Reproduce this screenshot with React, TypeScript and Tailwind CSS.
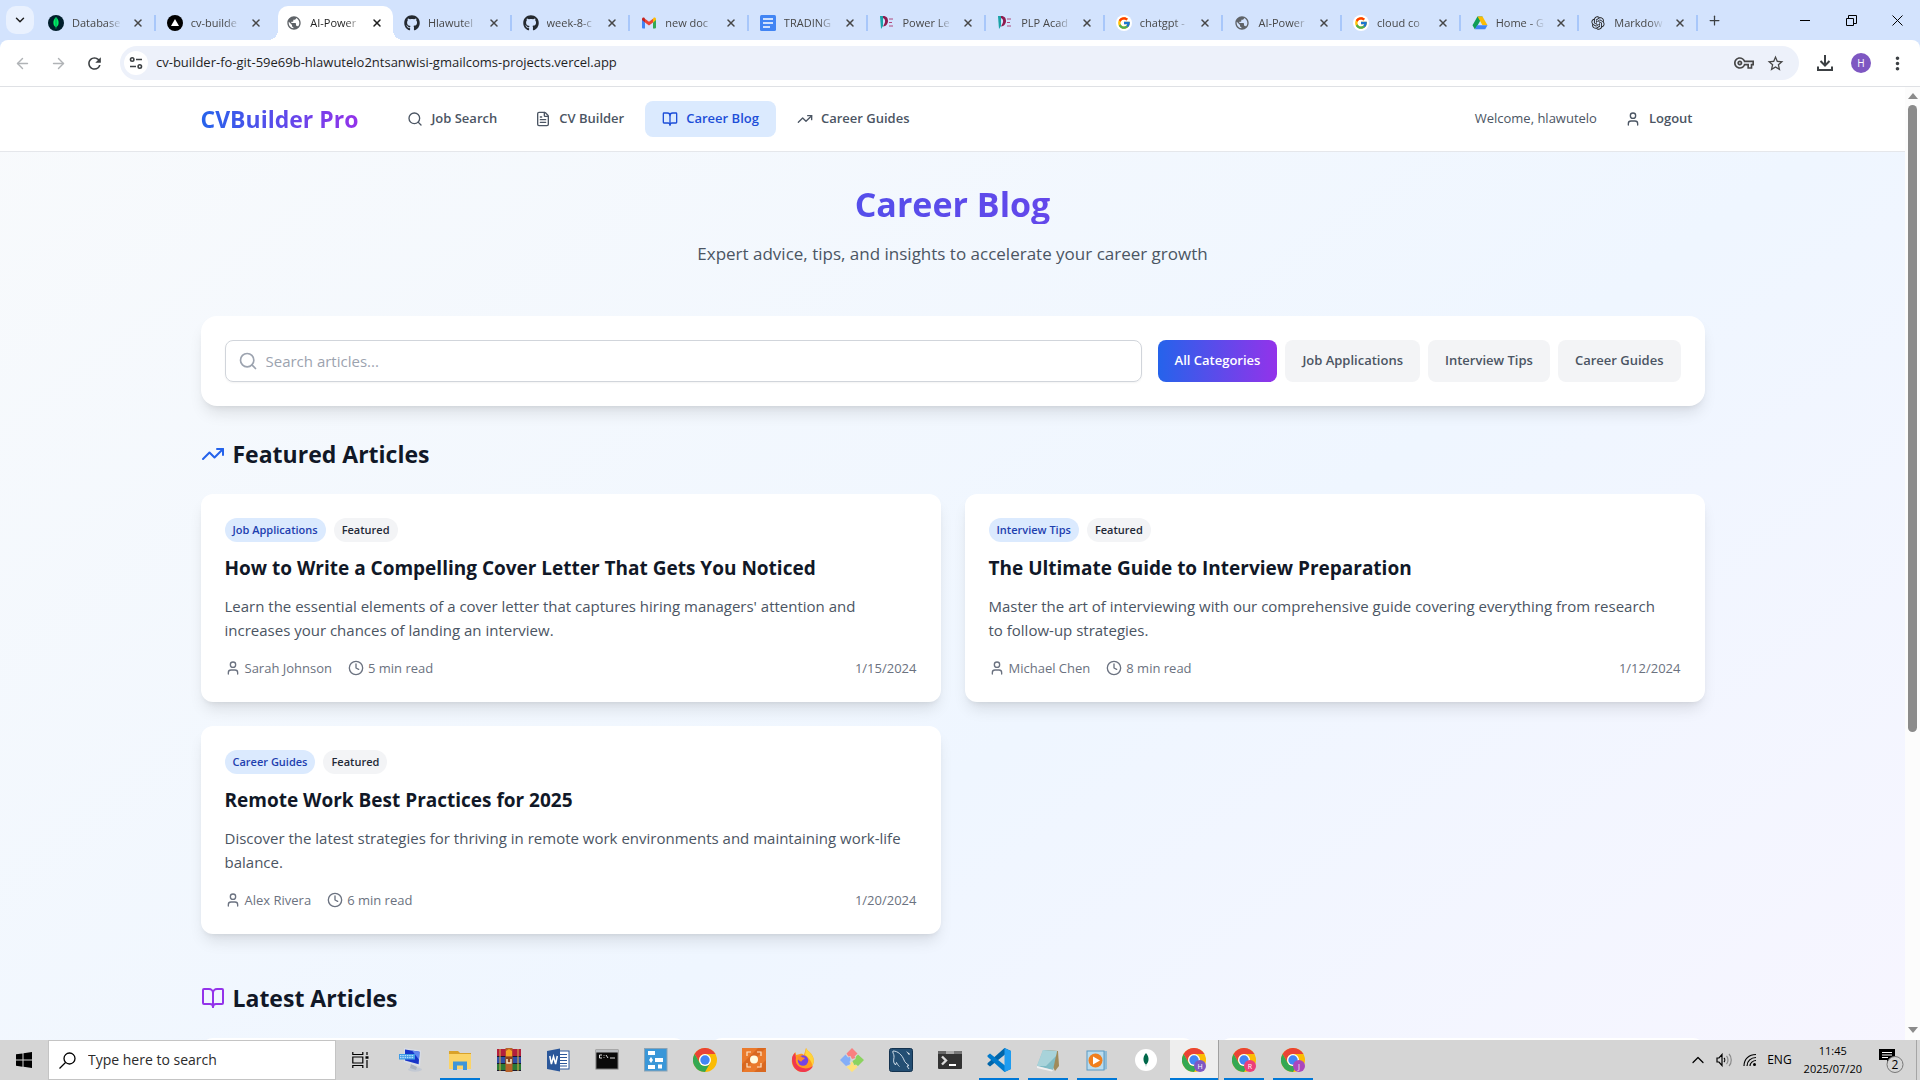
import React from "react";
import {
  Search,
  FileText,
  BookOpen,
  TrendingUp,
  User,
  Clock,
  ArrowLeft,
  ArrowRight,
  ChevronDown,
  ChevronUp,
  Plus,
  X,
} from "lucide-react";
import { FaGithub } from "react-icons/fa";
import { FcGoogle } from "react-icons/fc";
import { RiOpenaiFill } from "react-icons/ri";
import { MdOutlineVpnKey, MdStarOutline, MdRefresh, MdMoreVert, MdPublic } from "react-icons/md";

/* ---------- Tab favicons ---------- */

const MongoTabIcon = () => (
  <svg viewBox="0 0 16 16" className="size-4">
    <circle cx="8" cy="8" r="8" fill="#001e2b" />
    <path d="M8 2c2 2.200 2.800 4 2.600 6.200C10.400 10.300 9.300 11.400 8.300 12.200L8 14l-.3-1.800C6.700 11.400 5.600 10.300 5.400 8.200 5.200 6 6 4.200 8 2z" fill="#00ed64" />
    <path d="M8 3v11" stroke="#00684a" strokeWidth=".6" />
  </svg>
);
const VercelIcon = () => (
  <svg viewBox="0 0 16 16" className="size-4">
    <circle cx="8" cy="8" r="8" fill="#000" />
    <path d="M8 4l4 7H4z" fill="#fff" />
  </svg>
);
const GlobeIcon = () => <MdPublic className="size-4 text-[#5f6368]" />;
const GithubIcon = () => <FaGithub className="size-4 text-[#24292f]" />;
const GmailIcon = () => (
  <svg viewBox="0 0 16 16" className="size-4">
    <path d="M1 4v8.500c0 .5.400.9.900.9H4V7.200z" fill="#4285f4" />
    <path d="M15 4v8.500c0 .5-.4.9-.9.9H12V7.200z" fill="#34a853" />
    <path d="M12 3.800v3.600l3-2.300V4c0-1.300-1.400-2-2.400-1.200z" fill="#fbbc04" />
    <path d="M4 3.800v3.600l4 3 4-3V3.800l-4 3z" fill="#ea4335" />
    <path d="M1 4v1.100l3 2.300V3.800l-.6-1C2.400 2 1 2.700 1 4z" fill="#c5221f" />
  </svg>
);
const DocsIcon = () => (
  <svg viewBox="0 0 16 16" className="size-4">
    <rect x="0" y="0" width="16" height="16" rx="1.500" fill="#4285f4" />
    <path d="M3 4h10M3 8h10M3 12h7" stroke="#fff" strokeWidth="1.600" />
  </svg>
);
const PlpIcon = () => (
  <svg viewBox="0 0 16 16" className="size-4">
    <path d="M1 1h3v10l-2 3z" fill="#1aa3a8" />
    <path d="M4 1c4 0 5 2.500 5 5s-2 5.500-5 5.500l1.500-3C6.500 7 6.500 4 4 3z" fill="#8e1b4f" />
    <path d="M10 4h4M10 7.500h3M10 11h4" stroke="#b0487c" strokeWidth="1" />
  </svg>
);
const GoogleIcon = () => (
  <span className="flex size-4 items-center justify-center rounded-full bg-white">
    <FcGoogle className="size-[14px]" />
  </span>
);
const DriveIcon = () => (
  <svg viewBox="0 0 16 16" className="size-4">
    <path d="M5.500 1.500h5L5 11.500 2.800 14.200.5 10.300z" fill="#0f9d58" />
    <path d="M5.500 1.500h5l5 8.800h-5z" fill="#fbbc04" />
    <path d="M5.200 10.300h10.300l-2.300 3.900H2.800z" fill="#4285f4" />
  </svg>
);
const OpenAiIcon = () => <RiOpenaiFill className="size-4 text-[#1f1f1f]" />;

const tabs = [
  { title: "Database", Icon: MongoTabIcon },
  { title: "cv-builde", Icon: VercelIcon },
  { title: "AI-Power", Icon: GlobeIcon, active: true },
  { title: "Hlawutel", Icon: GithubIcon },
  { title: "week-8-c", Icon: GithubIcon },
  { title: "new doc", Icon: GmailIcon },
  { title: "TRADING", Icon: DocsIcon },
  { title: "Power Le", Icon: PlpIcon },
  { title: "PLP Acad", Icon: PlpIcon },
  { title: "chatgpt -", Icon: GoogleIcon },
  { title: "AI-Power", Icon: GlobeIcon },
  { title: "cloud co", Icon: GoogleIcon },
  { title: "Home - G", Icon: DriveIcon },
  { title: "Markdow", Icon: OpenAiIcon },
];

function TabStrip() {
  return (
    <div className="flex h-10 items-end bg-[#d3e3fd]">
      <div className="flex h-10 w-[37px] items-center pl-[6px]">
        <button aria-label="Search tabs" className="flex size-7 items-center justify-center rounded-[10px] bg-[#e9f1fe] text-[#1f1f1f]">
          <ChevronDown size={14} strokeWidth={2.5} />
        </button>
      </div>
      <div className="grid h-[34px] min-w-0 max-w-[1661px] flex-1 grid-cols-14">
        {tabs.map(({ title, Icon, active }, i) => (
          <div key={i} className={active ? "flex min-w-0 pl-1" : "flex min-w-0 pl-[11px]"}>
            <div
              className={
                active
                  ? "relative flex min-w-0 flex-1 items-center rounded-t-[10px] bg-white pl-2 text-[#1f1f1f]"
                  : "flex min-w-0 flex-1 items-center text-[#474747]"
              }
            >
              {active && (
                <>
                  <span className="absolute bottom-0 -left-[10px] size-[10px] bg-[radial-gradient(circle_at_top_left,transparent_10px,white_10px)]" />
                  <span className="absolute bottom-0 -right-[10px] size-[10px] bg-[radial-gradient(circle_at_top_right,transparent_10px,white_10px)]" />
                </>
              )}
              <button className="flex min-w-0 flex-1 items-center gap-2">
                <span className="shrink-0">
                  <Icon />
                </span>
                <span className="min-w-0 flex-1 overflow-hidden text-left text-[11px] whitespace-nowrap [mask-image:linear-gradient(to_right,black_70%,transparent)]">
                  {title}
                </span>
              </button>
              <button aria-label="Close tab" className="flex w-8 shrink-0 items-center justify-center">
                <X size={12} strokeWidth={3} />
              </button>
              {!active && <span className={i === 1 ? "h-4 w-[2px]" : "h-4 w-[2px] bg-[#a8c7fa]"} />}
            </div>
          </div>
        ))}
      </div>
      <button aria-label="New tab" className="flex h-10 w-[33px] items-center justify-center text-[#3c4043]">
        <Plus size={15} strokeWidth={2} />
      </button>
      <div className="ml-auto flex h-10 text-black">
        <button aria-label="Minimize" className="flex w-[46px] items-center justify-center">
          <svg width="10" height="10" stroke="currentColor">
            <path d="M0 5.500h10" />
          </svg>
        </button>
        <button aria-label="Restore" className="flex w-[46px] items-center justify-center">
          <svg width="11" height="11" stroke="currentColor" fill="none">
            <path d="M.5 3.500h7v7h-7zM2.500 3V.5h8v8H8" />
          </svg>
        </button>
        <button aria-label="Close" className="flex w-[46px] items-center justify-center">
          <svg width="11" height="11" stroke="currentColor">
            <path d="M.5.5l10 10M10.500.5l-10 10" />
          </svg>
        </button>
      </div>
    </div>
  );
}

function Toolbar() {
  return (
    <div className="bg-[#d3e3fd]">
      <div className="flex h-[47px] items-center rounded-t-lg border-b border-[#dfe1e5] bg-white">
        <button aria-label="Back" className="flex w-9 justify-center pl-2 text-[#b0b3b6]">
          <ArrowLeft size={17} strokeWidth={2} />
        </button>
        <button aria-label="Forward" className="flex w-9 justify-center pl-2 text-[#b0b3b6]">
          <ArrowRight size={17} strokeWidth={2} />
        </button>
        <button aria-label="Reload" className="flex w-12 justify-center pr-1 text-[#3c4043]">
          <MdRefresh size={19} />
        </button>
        <div className="flex h-[34px] min-w-0 flex-1 items-center rounded-full bg-[#edf1fa] pl-1">
          <button aria-label="Site information" className="flex size-6 items-center justify-center rounded-full bg-white text-[#3c4043]">
            <svg width="14" height="14" viewBox="0 0 14 14" fill="none" stroke="currentColor" strokeWidth="1.600">
              <circle cx="3.200" cy="3.500" r="1.700" />
              <path d="M7 3.500h6M1 10.500h6" />
              <circle cx="10.800" cy="10.500" r="1.700" />
            </svg>
          </button>
          <input
            aria-label="Address"
            className="min-w-0 flex-1 bg-transparent px-2 text-[13px] text-[#1f1f1f] outline-none"
            defaultValue="cv-builder-fo-git-59e69b-hlawutelo2ntsanwisi-gmailcoms-projects.vercel.app"
          />
          <button aria-label="Passwords" className="mr-3 text-[#474747]">
            <MdOutlineVpnKey size={20} />
          </button>
          <button aria-label="Bookmark" className="mr-[14px] text-[#474747]">
            <MdStarOutline size={19} />
          </button>
        </div>
        <button aria-label="Downloads" className="ml-[18px] text-[#3c4043]">
          <svg width="16" height="18" viewBox="0 0 16 18" fill="none" stroke="currentColor" strokeWidth="2">
            <path d="M8 1v10M3.500 7L8 11.500 12.500 7M1 12.500V16h14v-3.500" />
          </svg>
        </button>
        <button aria-label="Profile" className="ml-[18px] flex size-5 items-center justify-center rounded-full bg-[#7e57c2] text-[10px] text-white">
          H
        </button>
        <button aria-label="Menu" className="mr-3 ml-4 text-[#3c4043]">
          <MdMoreVert size={21} />
        </button>
      </div>
    </div>
  );
}

/* ---------- Web page ---------- */

const navItems = [
  { label: "Job Search", Icon: Search },
  { label: "CV Builder", Icon: FileText },
  { label: "Career Blog", Icon: BookOpen, active: true },
  { label: "Career Guides", Icon: TrendingUp },
];

const categories = ["All Categories", "Job Applications", "Interview Tips", "Career Guides"];

const articles = [
  {
    category: "Job Applications",
    title: "How to Write a Compelling Cover Letter That Gets You Noticed",
    excerpt:
      "Learn the essential elements of a cover letter that captures hiring managers' attention and increases your chances of landing an interview.",
    author: "Sarah Johnson",
    time: "5 min read",
    date: "1/15/2024",
  },
  {
    category: "Interview Tips",
    title: "The Ultimate Guide to Interview Preparation",
    excerpt:
      "Master the art of interviewing with our comprehensive guide covering everything from research to follow-up strategies.",
    author: "Michael Chen",
    time: "8 min read",
    date: "1/12/2024",
  },
  {
    category: "Career Guides",
    title: "Remote Work Best Practices for 2025",
    excerpt:
      "Discover the latest strategies for thriving in remote work environments and maintaining work-life balance.",
    author: "Alex Rivera",
    time: "6 min read",
    date: "1/20/2024",
  },
];

function SiteHeader() {
  return (
    <header className="border-b border-[#e5e7eb] bg-white">
      <div className="mx-auto flex h-16 max-w-[1536px] items-center px-4">
        <a href="#home" className="bg-linear-to-r/srgb from-[#2563eb] to-[#9333ea] bg-clip-text text-[23px] leading-8 font-bold text-transparent">
          CVBuilder Pro
        </a>
        <nav className="ml-8 flex gap-1">
          {navItems.map(({ label, Icon, active }) => (
            <a
              key={label}
              href="#nav"
              className={
                active
                  ? "flex h-9 items-center gap-2 rounded-lg bg-[#dbeafe] px-[17px] text-[13px] font-semibold text-[#1d4ed8]"
                  : "flex h-9 items-center gap-2 rounded-lg px-[17px] text-[13px] font-semibold text-[#4b5563]"
              }
            >
              <Icon size={16} />
              {label}
            </a>
          ))}
        </nav>
        <div className="ml-auto flex items-center gap-4">
          <span className="text-[13px] text-[#4b5563]">Welcome, hlawutelo</span>
          <button className="flex h-9 items-center gap-2 rounded-lg px-3 text-[13px] font-semibold text-[#4b5563]">
            <User size={16} />
            Logout
          </button>
        </div>
      </div>
    </header>
  );
}

function ArticleCard({ category, title, excerpt, author, time, date }: (typeof articles)[number]) {
  return (
    <article className="rounded-xl bg-white p-6 shadow-lg">
      <div className="flex gap-2 text-[11px] leading-4 font-semibold">
        <span className="rounded-full bg-[#dbeafe] px-2 py-1 text-[#1e40af]">{category}</span>
        <span className="rounded-full bg-[#f3f4f6] px-2 py-1 text-[#1f2937]">Featured</span>
      </div>
      <h3 className="mt-3 text-[19px] leading-7 font-bold text-[#111827]">{title}</h3>
      <p className="mt-3 pr-3 text-[15px] leading-6 text-[#4b5563]">{excerpt}</p>
      <div className="mt-4 flex items-center gap-4 text-[13px] leading-5 text-[#6b7280]">
        <span className="flex items-center gap-1">
          <User size={16} />
          {author}
        </span>
        <span className="flex items-center gap-1">
          <Clock size={16} />
          {time}
        </span>
        <time className="ml-auto">{date}</time>
      </div>
    </article>
  );
}

function BlogPage() {
  return (
    <div className="min-h-[1390px] flex-1 bg-linear-to-br/srgb from-[#f8fafc] via-[#eff6ff] to-[#faf5ff]">
      <SiteHeader />
      <main className="mx-auto max-w-[1536px] px-4 py-8">
        <div className="mb-12 text-center">
          <h1 className="mb-4 bg-linear-to-r/srgb from-[#2563eb] to-[#9333ea] bg-clip-text text-[34px] leading-10 font-bold text-transparent">
            Career Blog
          </h1>
          <p className="text-[17px] leading-7 text-[#4b5563]">
            Expert advice, tips, and insights to accelerate your career growth
          </p>
        </div>

        <section className="mb-8 flex gap-4 rounded-2xl bg-white p-6 shadow-lg">
          <label className="flex h-[42px] min-w-0 flex-1 items-center gap-2 rounded-lg border border-[#d1d5db] px-3 text-[#9ca3af] shadow-xs">
            <Search size={20} />
            <input
              aria-label="Search articles"
              placeholder="Search articles..."
              className="min-w-0 flex-1 bg-transparent text-[15px] text-[#111827] outline-none placeholder:text-[#9ca3af]"
            />
          </label>
          <div className="flex gap-2">
            {categories.map((label, i) => (
              <button
                key={label}
                className={
                  i === 0
                    ? "rounded-lg bg-linear-to-r/srgb from-[#2563eb] to-[#9333ea] px-[17px] text-[13px] font-semibold text-white"
                    : "rounded-lg bg-[#f3f4f6] px-[17px] text-[13px] font-semibold text-[#4b5563]"
                }
              >
                {label}
              </button>
            ))}
          </div>
        </section>

        <section className="mb-12">
          <h2 className="mb-6 flex items-center gap-2 text-[23px] leading-8 font-bold text-[#111827]">
            <TrendingUp size={24} className="text-[#2563eb]" />
            Featured Articles
          </h2>
          <div className="grid grid-cols-2 gap-6">
            {articles.map((a) => (
              <ArticleCard key={a.title} {...a} />
            ))}
          </div>
        </section>

        <section>
          <h2 className="mb-6 flex items-center gap-2 text-[23px] leading-8 font-bold text-[#111827]">
            <BookOpen size={24} className="text-[#9333ea]" />
            Latest Articles
          </h2>
          <div className="grid grid-cols-3 gap-6">
            {[0, 1, 2].map((n) => (
              <article key={n} className="h-64 rounded-xl bg-white shadow-lg" />
            ))}
          </div>
        </section>
      </main>
    </div>
  );
}

function Scrollbar() {
  return (
    <div className="flex w-[15px] flex-col items-center justify-between bg-[#fcfcfc] pt-[6px] pb-[7px]">
      <span className="border-x-[5px] border-b-[6px] border-x-transparent border-b-[#8b8b8b]" />
      <div className="mt-[6px] w-[9px] flex-1">
        <div className="h-[68%] rounded-full bg-[#8b8b8b]" />
      </div>
      <span className="border-x-[5px] border-t-[6px] border-x-transparent border-t-[#8b8b8b]" />
    </div>
  );
}

/* ---------- Taskbar ---------- */

const ChromeIcon = ({ badge, color }: { badge?: string; color?: string }) => (
  <span className="relative block size-6">
    <svg viewBox="0 0 24 24" className="size-6">
      <circle cx="12" cy="12" r="12" fill="#fbbc04" />
      <path d="M1.600 6A12 12 0 0 1 22.400 6H12a6 6 0 0 0-5.200 9z" fill="#ea4335" />
      <path d="M1.600 6A12 12 0 0 0 12 24l5.200-9A6 6 0 0 1 6.800 15z" fill="#34a853" />
      <circle cx="12" cy="12" r="6" fill="#fff" />
      <circle cx="12" cy="12" r="4.700" fill="#4285f4" />
    </svg>
    {badge && (
      <svg viewBox="0 0 12 12" className="absolute right-0 bottom-0 size-3">
        <circle cx="6" cy="6" r="6" fill={color} />
        <text x="6" y="8.500" fontSize="7" fill="#fff" textAnchor="middle" fontFamily="Open Sans">
          {badge}
        </text>
      </svg>
    )}
  </span>
);

const KeyboardPcIcon = () => (
  <svg viewBox="0 0 24 24" className="size-6">
    <ellipse cx="16" cy="21.500" rx="7" ry="2.200" fill="#c3c9d3" />
    <path d="M12 16l6 3-1 3-6-2z" fill="#aab2c0" />
    <path d="M5 0l17 2.500-1 16L5 14z" fill="#d9dee8" />
    <path d="M6 1.500l14.500 2.200-.8 12.500L6 12.500z" fill="#1733c8" />
    <path d="M13 2.600l7.500 1.100-.5 8z" fill="#5f86ee" />
    <rect x="0" y="6" width="16" height="5.500" fill="#3e9be6" />
    <path d="M1 7.700h14M1 9.700h14" stroke="#d5ecff" strokeDasharray="1.500 .8" />
  </svg>
);
const ExplorerIcon = () => (
  <svg viewBox="0 0 24 24" className="size-6">
    <path d="M1 3h9l2 2h11v4H1z" fill="#d9a22a" />
    <rect x="1" y="6" width="22" height="15" fill="#fbd468" />
    <path d="M5 22v-8.500h14V22h-4v-4.500H9V22z" fill="#3f96d8" />
  </svg>
);
const RarIcon = () => (
  <svg viewBox="0 0 24 24" className="size-6">
    <rect width="24" height="8" y="1" fill="#b31f3c" />
    <rect width="24" height="7" y="9" fill="#2e4fa5" />
    <rect width="24" height="7" y="16" fill="#2a7a35" />
    <path d="M0 8.500h24M0 15.500h24M0 22.500h24" stroke="#1b1b2e" strokeWidth="1" />
    <path d="M3 1v22M21 1v22" stroke="#e0b34a" strokeWidth="1" />
    <rect x="8.500" y="0" width="7" height="24" fill="#b8622a" />
    <path d="M9 3l3-2 3 2v5H9z" fill="#f5a623" />
    <path d="M8.500 9h7v7h-7z" fill="#8a4018" />
    <path d="M10 11v4h4v-4" stroke="#f6e9c9" strokeWidth="1.500" fill="none" />
  </svg>
);
const WordIcon = () => (
  <svg viewBox="0 0 24 24" className="size-6">
    <rect x="12" y="3" width="11" height="18" fill="#fff" stroke="#2b579a" />
    <path d="M14 6.500h7M14 9.500h7M14 12.500h7M14 15.500h7M14 18h7" stroke="#2b579a" />
    <path d="M1 3l13-2.500v23L1 21z" fill="#2b579a" />
    <path d="M3.800 8l1.600 8 2.100-7.500L9.600 16l1.700-8" fill="none" stroke="#fff" strokeWidth="1.500" />
  </svg>
);
const CmdIcon = () => (
  <svg viewBox="0 0 24 24" className="size-6">
    <rect x="1" y="2" width="22" height="19" fill="#0a0a0a" stroke="#7a7a7a" />
    <rect x="1" y="2" width="22" height="2.500" fill="#b9bcc0" />
    <path d="M7 7H4.500v3H7M9 7v.7M9 9.300v.7M11 7l2 3M15 10h5" stroke="#ddd" fill="none" />
  </svg>
);
const FlowIcon = () => (
  <svg viewBox="0 0 24 24" className="size-6">
    <rect x=".5" y=".5" width="22.500" height="22.500" fill="#3a97d8" stroke="#8ba3b5" />
    <g fill="#fff">
      <rect x="4" y="3" width="7" height="4" />
      <rect x="11" y="10" width="8" height="4" />
      <rect x="4" y="17" width="7" height="4" />
      <rect x="14" y="16.500" width="4" height="4" />
      <path d="M7 9l2 3-2 3-2-3z" />
    </g>
  </svg>
);
const CaptureIcon = () => (
  <svg viewBox="0 0 24 24" className="size-6">
    <rect width="24" height="24" fill="#ea7a2c" />
    <path d="M0 16L16 0h8L0 24zM24 12v12H12z" fill="#d96820" />
    <circle cx="12" cy="11.500" r="4" fill="#fffbe0" />
    <path d="M5 8V4h4M15 4h4v4M19 15v4h-4M9 19H5v-4" stroke="#ffe6c9" strokeWidth="1.200" fill="none" />
  </svg>
);
const FirefoxIcon = () => (
  <svg viewBox="0 0 24 24" className="size-6">
    <path d="M15 0c1 3 7 5 7.700 11.500C23.300 18.500 18 24 11.800 24 5.500 24 .8 19 .8 13c0-4 1.700-7 3.500-9l1 3L9 6c1.500-.5 3 .2 4 1z" fill="#ff9a1f" />
    <path d="M15 0c1 3 7 5 7.700 11.500.2 2-.3 4-1.200 6C20 12 17 9 14 7z" fill="#ffd43a" />
    <path d="M1 11c0 7 4 13 11 13 4 0 8-2 10-6-4 3-9 3-13 1-3-1.500-5-5-4-9l-1-5C2 6.500 1 8.500 1 11z" fill="#f0384f" />
    <circle cx="12" cy="12.500" r="5.200" fill="#7542e5" />
    <path d="M6.500 9c2-2 4-1 5 .5 1.500 0 2.500.5 2.500.5-1 2-3 1.500-3.500 3.500-1.500 0-4-1.500-4-4.500z" fill="#ff8a2a" />
  </svg>
);
const GitIcon = () => (
  <svg viewBox="0 0 24 24" className="size-6">
    <path d="M12 0l5.500 5.500-3 3 1 1.500-3.500 1-1.500-3-2 .5-2-3z" fill="#f98080" />
    <path d="M5.500 6.500L8 9.500l2-.5.500 3-1 2 1 2-4.500 2-6-6z" fill="#84aef8" />
    <path d="M18 6.500l6 5.500-6 6-2-1.500-2 .5-1.500-4 3-2 .5-2.500z" fill="#8bd35f" />
    <path d="M11 14l2 .5 1 3 2-.5 1.500 2L12 24l-5.500-5 4-2z" fill="#ffe27a" />
  </svg>
);
const MysqlIcon = () => (
  <svg viewBox="0 0 24 24" className="size-6">
    <rect x=".5" y=".5" width="23" height="23" rx="2" fill="#234e73" stroke="#15334f" />
    <path
      d="M4 3c5 0 9 4 11 9 .8 2.500 2.500 3.500 5 5.500l-2 .5 2 3M4 3c-1 1 1 3 1 5 .3 2-1 4 0 7l1.500 2 1-2.500c1 1.500 1.500 3 3 4"
      stroke="#dce8f2"
      strokeWidth=".9"
      fill="none"
    />
    <path d="M17 3l4 3-1 1z" fill="#fff" />
  </svg>
);
const TerminalIcon = () => (
  <svg viewBox="0 0 24 24" className="size-6">
    <rect y="3" width="24" height="18" rx="1" fill="#333" />
    <path d="M0 6V4c0-.6.400-1 1-1h7v3z" fill="#666" />
    <path d="M8 3h8v3H8z" fill="#aaa" />
    <path d="M16 3h7c.6 0 1 .4 1 1v2h-8z" fill="#777" />
    <path d="M4 8.500l4 4-4 4" stroke="#ddd" strokeWidth="2.400" fill="none" />
    <path d="M11 17h7" stroke="#fff" strokeWidth="2" />
  </svg>
);
const CodeIcon = () => (
  <svg viewBox="0 0 24 24" className="size-6">
    <path d="M17.500 0L24 3v4.500L18 6.500 3 18.500.5 16.500v-1.200z" fill="#0065a9" />
    <path d="M.5 7.500L3 5.500l15 12 6-1V21l-6.500 3L.5 8.700z" fill="#007acc" />
    <path d="M17.500 0L24 3v18l-6.500 3z" fill="#1f9cf0" />
  </svg>
);
const NotepadIcon = () => (
  <svg viewBox="0 0 24 24" className="size-6">
    <path d="M8 2l14 1 1 15-4 5z" fill="#a08a5a" />
    <path d="M7 2l14 1-4 19L1 18z" fill="#7fbcc6" />
    <path d="M7 2l14 1-1 5-10 10-9 0z" fill="#b9dde2" opacity=".7" />
    <path d="M1 18l16 4-1 1.500L1 20z" fill="#f1f1f1" />
  </svg>
);
const MediaIcon = () => (
  <svg viewBox="0 0 24 24" className="size-6">
    <path d="M4 3h18v18l-3 1H4z" fill="#8fbcd8" />
    <rect x="2" y="3" width="17" height="19" fill="#b9dcef" stroke="#5b9ac4" />
    <circle cx="10.500" cy="12.500" r="7" fill="#f07f1e" />
    <path d="M8 8.500l7 4-7 4z" fill="#fff" />
  </svg>
);
const MongoIcon = () => (
  <svg viewBox="0 0 24 24" className="size-6">
    <circle cx="12" cy="12" r="11" fill="#fff" />
    <path d="M12 5c2 2.500 2.800 4.500 2.500 7-.2 2.500-1.300 3.500-2.200 4.300L12 19l-.3-2.700c-.9-.8-2-1.800-2.200-4.300C9.200 9.500 10 7.500 12 5z" fill="#00684a" />
  </svg>
);

const apps: { name: string; icon: React.ReactNode; open?: boolean; active?: boolean }[] = [
  { name: "On-screen keyboard", icon: <KeyboardPcIcon /> },
  { name: "File Explorer", icon: <ExplorerIcon />, open: true },
  { name: "WinRAR", icon: <RarIcon /> },
  { name: "Word", icon: <WordIcon /> },
  { name: "Command Prompt", icon: <CmdIcon /> },
  { name: "Flow designer", icon: <FlowIcon /> },
  { name: "Chrome", icon: <ChromeIcon /> },
  { name: "Screen capture", icon: <CaptureIcon /> },
  { name: "Firefox", icon: <FirefoxIcon /> },
  { name: "Git", icon: <GitIcon /> },
  { name: "MySQL Workbench", icon: <MysqlIcon /> },
  { name: "Terminal", icon: <TerminalIcon /> },
  { name: "Visual Studio Code", icon: <CodeIcon />, open: true },
  { name: "Notepad", icon: <NotepadIcon />, open: true },
  { name: "Media Player", icon: <MediaIcon />, open: true },
  { name: "MongoDB Compass", icon: <MongoIcon /> },
  { name: "Chrome, profile H", icon: <ChromeIcon badge="H" color="#7e57c2" />, open: true, active: true },
  { name: "Chrome, profile R", icon: <ChromeIcon badge="R" color="#ec407a" />, open: true },
  { name: "Chrome, profile J", icon: <ChromeIcon badge="J" color="#ab47bc" />, open: true },
];

function Taskbar() {
  return (
    <footer className="flex h-10 shrink-0 bg-[#d5d5d5] text-black">
      <button aria-label="Start" className="flex w-12 items-center justify-center">
        <svg width="16" height="16" viewBox="0 0 16 16">
          <path d="M0 2.300L6.500 1.400v6.200H0zM7.500 1.200L16 0v7.600H7.500zM0 8.500h6.500v6.200L0 13.800zM7.500 8.500H16V16l-8.500-1.200z" />
        </svg>
      </button>
      <label className="flex w-[288px] items-center gap-3 border border-[#c4c4c4] bg-white px-[10px]">
        <svg width="17" height="17" viewBox="0 0 17 17" fill="none" stroke="#000" strokeWidth="1.300">
          <circle cx="10.500" cy="6.500" r="5.500" />
          <path d="M6.500 10.500L.5 16.500" />
        </svg>
        <input
          aria-label="Search Windows"
          placeholder="Type here to search"
          className="min-w-0 flex-1 bg-transparent text-sm outline-none placeholder:text-[#2b2b2b]"
        />
      </label>
      <button aria-label="Task View" className="flex w-12 items-center justify-center">
        <svg width="17" height="16" viewBox="0 0 17 16" fill="none" stroke="#000" strokeWidth="1.200">
          <path d="M.8 0v2.500h10V0M.8 16v-2.500h10V16M.8 5h10v6H.8zM15 0v3M15 8v8" />
          <path d="M13.500 5.500h3" strokeWidth="2.500" />
        </svg>
      </button>
      <div className="ml-[2px] flex">
        {apps.map(({ name, icon, open, active }) => (
          <button
            key={name}
            aria-label={name}
            className={
              active
                ? "flex w-[49px] flex-col items-center border-r border-[#a0a0a0] bg-[#eeeeee]"
                : "flex w-[49px] flex-col items-center"
            }
          >
            <span className="flex flex-1 items-center pt-[2px]">{icon}</span>
            <span
              className={
                active ? "h-[2px] w-full bg-[#0078d7]" : open ? "h-[2px] w-10 bg-[#0078d7]" : "h-[2px] w-10"
              }
            />
          </button>
        ))}
      </div>
      <div className="ml-auto flex items-center">
        <button aria-label="Show hidden icons" className="mr-2">
          <ChevronUp size={20} strokeWidth={1.5} />
        </button>
        <button aria-label="Volume" className="mr-[10px]">
          <svg width="17" height="14" viewBox="0 0 17 14" fill="none" stroke="#000" strokeWidth="1.200">
            <path d="M1 5h2l3-3.500v11L3 9H1zM8 5c1 1 1 3 0 4" />
            <path d="M10.500 3c2 2 2 6 0 8M13 1c3 3 3 9 0 12" stroke="#8a8a8a" />
          </svg>
        </button>
        <button aria-label="Network" className="mr-[10px]">
          <svg width="14" height="14" viewBox="0 0 14 14" fill="none" stroke="#000" strokeWidth="1.200">
            <path d="M1 13C1 6 6 1.500 13 1.500M4 13c0-5 4-8.500 9-8.500M7 13c0-3 3-5.500 6-5.500" />
            <circle cx="11.500" cy="11.500" r="1.500" fill="#000" stroke="none" />
          </svg>
        </button>
        <span className="mr-3 text-xs">ENG</span>
        <div className="text-center text-[11px] leading-[18px]">
          <div>11:45</div>
          <div>2025/07/20</div>
        </div>
        <button aria-label="Notifications" className="mr-3 ml-[17px]">
          <svg width="25" height="26" viewBox="0 0 25 26">
            <path d="M0 2h16v11h-5l-3 3v-3H0z" />
            <path d="M3 5.500h10M3 8h10M3 10.500h6" stroke="#fff" />
            <circle cx="16" cy="17.500" r="8" fill="#d5d5d5" stroke="#777" />
            <text x="16" y="22" fontSize="12" textAnchor="middle" fontFamily="Open Sans">
              2
            </text>
          </svg>
        </button>
        <span className="h-10 w-1 border-l border-[#a5a5a5]" />
      </div>
    </footer>
  );
}

export default function App() {
  return (
    <div className="flex h-screen flex-col overflow-hidden bg-white font-['Open_Sans','Noto_Sans',sans-serif]">
      <TabStrip />
      <Toolbar />
      <div className="flex min-h-0 flex-1 items-stretch overflow-hidden">
        <div className="min-w-0 flex-1 overflow-hidden">
          <BlogPage />
        </div>
        <Scrollbar />
      </div>
      <Taskbar />
    </div>
  );
}
